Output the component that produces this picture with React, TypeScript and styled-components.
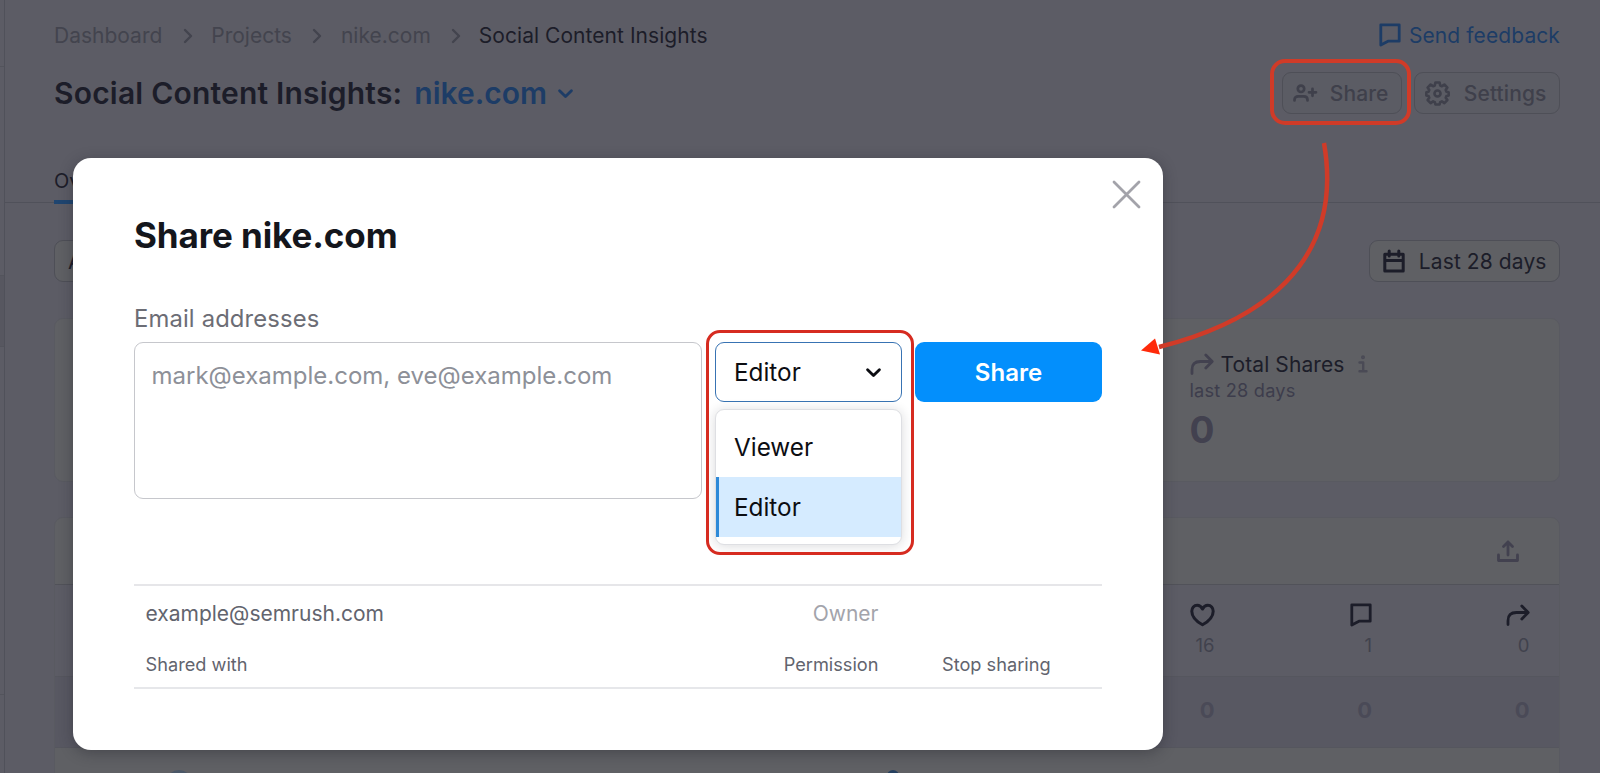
import * as React from "react";
import styled, { createGlobalStyle, css } from "styled-components";

const theme = {
  fontFamily: `Inter, "Liberation Sans", sans-serif`,
  page: "#5c5c65",
  card: "#5f6064",
  line: "#50515a",
  ink: "#1c1d29",
  muted: "#42414f",
  faint: "#43444e",
  link: "#1d3c66",
  red: "#d03b28"
};

const GlobalStyle = createGlobalStyle`
  * {
    box-sizing: border-box;
  }
  body {
    margin: 0;
    overflow: hidden;
    font-family: ${theme.fontFamily};
    background: ${theme.page};
  }
`;

const Page = styled.div`
  position: relative;
  display: grid;
  grid-template-columns: 5px 1fr;
  width: 1600px;
  height: 773px;
  overflow: hidden;
  background: ${theme.page};
  color: ${theme.ink};
`;

const Rail = styled.div`
  display: flex;
  flex-direction: column;
  border-right: 1px solid ${theme.line};
`;

const RailItem = styled.div<{ height: number; active?: boolean }>`
  flex: none;
  height: ${({ height }) => height}px;
  border-bottom: 1px solid #53545c;
  background: ${({ active }) => (active ? "#575760" : "transparent")};
`;

const Main = styled.main`
  display: flex;
  flex-direction: column;
  min-width: 0;
`;

const Header = styled.header`
  display: flex;
  flex-direction: column;
  flex: none;
  height: 203px;
  padding: 20px 40px 0 49px;
  border-bottom: 1px solid ${theme.line};
`;

const HeaderRow = styled.div<{ height: number }>`
  display: flex;
  flex: none;
  align-items: center;
  justify-content: space-between;
  height: ${({ height }) => height}px;
`;

const Breadcrumbs = styled.nav`
  display: flex;
  align-items: center;
  gap: 18.5px;
  padding-top: 1px;
  font-size: 21px;
  line-height: 30px;
  color: ${theme.faint};
`;

const Current = styled.span`
  margin-left: -1px;
  letter-spacing: 0.05px;
  color: ${theme.ink};
`;

const Feedback = styled.a`
  display: flex;
  align-items: center;
  gap: 8px;
  font-size: 21px;
  letter-spacing: 0.1px;
  color: ${theme.link};
`;

const Title = styled.h1`
  display: flex;
  align-items: center;
  margin: 0;
  font-size: 30px;
  font-weight: 600;
  line-height: 42px;
  letter-spacing: 0.2px;
`;

const Domain = styled.span`
  display: flex;
  align-items: center;
  gap: 10px;
  margin-left: 12px;
  letter-spacing: 0;
  color: ${theme.link};
`;

const Actions = styled.div`
  display: flex;
  gap: 12px;
`;

const GhostButton = styled.button<{ width: number; dark?: boolean }>`
  display: flex;
  align-items: center;
  justify-content: space-between;
  width: ${({ width }) => width}px;
  height: 42px;
  padding: 0 12.5px 0 ${({ dark }) => (dark ? 13 : 10)}px;
  border: 1px solid #4e4f57;
  border-radius: 9px;
  background: ${({ dark }) => (dark ? theme.card : "#5b5c64")};
  color: ${({ dark }) => (dark ? theme.ink : "#3f404b")};
  font-family: inherit;
  font-size: 21px;
  font-weight: ${({ dark }) => (dark ? 400 : 500)};
  letter-spacing: 0.1px;
`;

const Tab = styled.div`
  flex: none;
  width: 120px;
  height: 45px;
  margin: 23px 0 -1px;
  padding-top: 7px;
  border-bottom: 4px solid #1f4570;
  font-size: 20px;
  line-height: 30px;
`;

const Body = styled.section`
  display: flex;
  flex-direction: column;
  padding: 37px 40px 0 49px;
`;

const Card = styled.div<{ height: number }>`
  display: flex;
  flex-direction: column;
  flex: none;
  height: ${({ height }) => height}px;
  margin-top: 36px;
  overflow: hidden;
  border: 1px solid #595a61;
  border-radius: 9px;
  background: ${theme.card};

  & + & {
    margin-top: 35px;
  }
`;

const Stat = styled.div`
  display: flex;
  flex-direction: column;
  width: 369.5px;
  margin-left: auto;
  padding-top: 31px;
  color: ${theme.muted};
`;

const StatName = styled.div`
  display: flex;
  align-items: center;
  height: 28px;
  font-size: 21px;
  letter-spacing: 0.1px;

  span {
    margin: 0 13px 0 7px;
    color: ${theme.ink};
  }
`;

const StatPeriod = styled.div`
  margin-top: -1px;
  font-size: 18.2px;
  line-height: 26px;
  letter-spacing: 0.2px;
  color: #3d3d4c;
`;

const StatValue = styled.div`
  margin-top: 7px;
  font-size: 37px;
  font-weight: 700;
  line-height: 40px;
`;

const TableHead = styled.div`
  display: flex;
  align-items: center;
  justify-content: flex-end;
  flex: none;
  height: 67px;
  padding-right: 40px;
  border-bottom: 1px solid #515259;
  color: ${theme.muted};
`;

const MetricRow = styled.div<{ summary?: boolean }>`
  display: grid;
  flex: none;
  grid-template-columns: repeat(3, 157.5px);
  justify-content: end;
  padding-right: 29.5px;
  background: ${theme.page};
  border-bottom: 1px solid #55565e;
  ${({ summary }) =>
    summary
      ? css`
          height: 71px;
          align-items: center;
          padding-bottom: 4px;
          background: #585862;
          font-size: 22px;
          font-weight: 700;
          color: #4a4a57;
        `
      : css`
          height: 92px;
          padding-top: 18px;
          font-size: 18.5px;
          color: #41424d;
        `}
`;

const Metric = styled.div`
  display: flex;
  flex-direction: column;
  align-items: flex-end;
  gap: 6px;
  line-height: 24px;

  svg {
    color: ${theme.ink};
  }
`;

const PostRow = styled.div`
  display: flex;
  gap: 695px;
  padding: 22px 0 0 111px;
`;

const Dot = styled.span<{ size: number; faded?: boolean }>`
  flex: none;
  width: ${({ size }) => size}px;
  height: ${({ size }) => size}px;
  border-radius: 50%;
  background: ${({ faded }) => (faded ? "#4a5767" : "#25405f")};
`;

// Dialog

const Dialog = styled.div`
  position: absolute;
  top: 158px;
  left: 73px;
  display: flex;
  flex-direction: column;
  width: 1090px;
  height: 592px;
  padding: 56px 61px 0;
  border-radius: 18px;
  background: #fff;
  box-shadow: 0 3px 14px rgba(25, 27, 35, 0.35);
`;

const CloseButton = styled.button`
  position: absolute;
  top: 22px;
  right: 22px;
  display: flex;
  padding: 0;
  border: 0;
  background: transparent;
  color: #a3a3aa;
`;

const DialogTitle = styled.h2`
  margin: 0;
  font-size: 35px;
  font-weight: 700;
  line-height: 42px;
  letter-spacing: -0.1px;
  color: #14161c;
`;

const Label = styled.label`
  margin-top: 45px;
  font-size: 23.8px;
  line-height: 36px;
  letter-spacing: 0.15px;
  color: #6c6d75;
`;

const Form = styled.div`
  display: grid;
  grid-template-columns: 568px 187px 187px;
  column-gap: 13px;
  align-items: start;
  margin-top: 5px;
  width: 968px;
  height: 158px;
`;

const Emails = styled.textarea`
  display: block;
  height: 157px;
  padding: 15px 16.5px;
  border: 1.5px solid #c6c7cc;
  border-radius: 9px;
  resize: none;
  font-family: inherit;
  font-size: 24px;
  line-height: 36px;
  outline: 0;

  &::placeholder {
    color: #8d9098;
    opacity: 1;
  }
`;

const SelectWrap = styled.div`
  display: flex;
  flex-direction: column;
  gap: 7px;
  font-size: 24.3px;
  color: #0c0d12;
`;

const Select = styled.div`
  display: flex;
  align-items: center;
  justify-content: space-between;
  height: 60px;
  padding: 0 19px 0 18px;
  border: 1.5px solid #3873b3;
  border-radius: 9px;
`;

const Menu = styled.div`
  height: 136px;
  padding-top: 7px;
  border: 1px solid #dedfe3;
  border-radius: 9px;
  background: #fff;
  box-shadow: 0 1px 12px rgba(25, 27, 35, 0.16);
`;

const Option = styled.div<{ selected?: boolean }>`
  height: 60px;
  padding-left: 15px;
  line-height: 60px;
  border-left: 3px solid ${({ selected }) => (selected ? "#2f8ad8" : "transparent")};
  background: ${({ selected }) => (selected ? "#d5ebff" : "transparent")};
`;

const ShareButton = styled.button`
  height: 60px;
  border: 0;
  border-radius: 9px;
  background: #038ffc;
  color: #fff;
  font-family: inherit;
  font-size: 24px;
  font-weight: 600;
`;

const Access = styled.div`
  height: 105px;
  margin-top: 84px;
  border-top: 2px solid #e6e6e9;
  border-bottom: 2px solid #e6e7ea;
`;

const AccessRow = styled.div<{ head?: boolean }>`
  display: grid;
  grid-template-columns: 500px 233px 1fr;
  padding-left: 11.5px;
  color: #62646e;
  font-size: ${({ head }) => (head ? 18.2 : 21)}px;
  line-height: ${({ head }) => (head ? 44 : 56)}px;
`;

const Permission = styled.span<{ faded?: boolean }>`
  text-align: right;
  color: ${({ faded }) => (faded ? "#a3a4ab" : "inherit")};
`;

const Stop = styled.span`
  padding-left: 63.5px;
`;

// Red callouts drawn over the page
const Callout = styled.div<{ bright?: boolean }>`
  position: absolute;
  pointer-events: none;
  ${({ bright }) =>
    bright
      ? css`
          top: 330px;
          left: 706px;
          width: 208px;
          height: 225px;
          border: 3px solid #d62b20;
          border-radius: 14px;
        `
      : css`
          top: 59px;
          left: 1270px;
          width: 141px;
          height: 66px;
          border: 4px solid ${theme.red};
          border-radius: 15px;
        `}
`;

const Arrow = styled.svg`
  position: absolute;
  top: 130px;
  left: 1130px;
  pointer-events: none;
`;

interface IconConfig {
  width: number;
  height: number;
  box: string;
  stroke?: number;
  children: React.ReactNode;
}

function Icon(props: IconConfig) {
  return (
    <svg
      width={props.width}
      height={props.height}
      viewBox={props.box}
      fill="none"
      stroke="currentColor"
      strokeWidth={props.stroke || 2.8}
      strokeLinecap="round"
      strokeLinejoin="round"
    >
      {props.children}
    </svg>
  );
}

const Separator = () => (
  <Icon width={12} height={16} box="-2 0 12 16" stroke={2.4}>
    <path d="M2 2l6 6-6 6" />
  </Icon>
);

const ChevronDown = () => (
  <Icon width={17} height={11} box="0 0 17 11" stroke={2.9}>
    <path d="M2.6 2.8l5.9 5.7 5.9-5.7" />
  </Icon>
);

const Bubble = () => (
  <Icon width={22} height={24} box="0 0 22 24">
    <path d="M1.8 1.8h18.4v16.4H9L1.8 22z" />
  </Icon>
);

const Forward = () => (
  <Icon width={24} height={24} box="0 0 24 24">
    <path d="M2 21.5v-3.8c0-5.5 3-8.2 8.5-8.2H22M15.8 3l6.4 6.5-6.4 6.5" />
  </Icon>
);

const AddUser = () => (
  <Icon width={25} height={18} box="0 0 25 18" stroke={2.7}>
    <circle cx="8" cy="4.8" r="3.2" />
    <path d="M1.5 16.5v-.6c0-2.3 1.5-3.6 3.7-3.6h5.6c2.2 0 3.7 1.3 3.7 3.6v.6M19.5 4.8v7M16 8.3h7" />
  </Icon>
);

// Eight rounded teeth around the hub
const Gear = () => (
  <Icon width={25} height={25} box="0 0 24 24" stroke={2.5}>
    <path d="M10 1.5h4l.6 2.8 1.6.7 2.4-1.6 2.9 2.900-1.600 2.400.7 1.600 2.100.5v3l-2.100.6-.7 1.600 1.600 2.300-2.900 2.900-2.400-1.600-1.600.7-.6 2.200h-4l-.6-2.200-1.600-.7-2.400 1.600-2.900-2.900 1.600-2.300-.7-1.600-2.100-.6v-3l2.100-.5.7-1.600L2.500 6.300l2.900-2.900L7.800 5l1.600-.7z" />
    <circle cx="12" cy="12" r="2.9" />
  </Icon>
);

const Calendar = () => (
  <Icon width={22} height={24} box="0 0 22 24" stroke={3}>
    <path d="M1.8 5.3h18.4v16.6H1.8zM2 11.6h18M6.2 2v5M15.8 2v5" />
  </Icon>
);

const Upload = () => (
  <Icon width={22} height={22} box="0 0 22 22" stroke={2.8}>
    <path d="M1.5 15v5.5h19V15M11 15V2M6.5 6.5L11 2l4.5 4.5" />
  </Icon>
);

const Heart = () => (
  <Icon width={25} height={24} box="0 0 25 24" stroke={3}>
    <path d="M12.5 6C11.3 3.6 9.300 2.3 7.2 2.3 4 2.3 1.8 4.8 1.8 8.2c0 5.6 5.2 10.5 10.7 13.6 5.5-3.1 10.7-8 10.7-13.6 0-3.4-2.200-5.900-5.400-5.900-2.100 0-4.100 1.300-5.300 3.700z" />
  </Icon>
);

const Info = () => (
  <Icon width={10} height={18} box="0 0 10 18" stroke={2.4}>
    <path d="M1.5 7.5h3.7V16M1.5 16.3h7" />
    <circle cx="5" cy="2.2" r=".8" />
  </Icon>
);

const InfoTint = styled.i`
  display: flex;
  color: #4a4a55;
`;

export default function App(): React.ReactElement {
  return (
    <Page>
      <GlobalStyle />
      <Rail>
        <RailItem height={67} />
        <RailItem height={209} />
        <RailItem height={71} active />
        <RailItem height={348} />
      </Rail>
      <Main>
        <Header>
          <HeaderRow height={30}>
            <Breadcrumbs>
              <span>Dashboard</span>
              <Separator />
              <span>Projects</span>
              <Separator />
              <span>nike.com</span>
              <Separator />
              <Current>Social Content Insights</Current>
            </Breadcrumbs>
            <Feedback>
              <Bubble />
              Send feedback
            </Feedback>
          </HeaderRow>
          <HeaderRow height={86}>
            <Title>
              Social Content Insights:
              <Domain>
                nike.com
                <ChevronDown />
              </Domain>
            </Title>
            <Actions>
              <GhostButton width={120}>
                <AddUser />
                Share
              </GhostButton>
              <GhostButton width={146}>
                <Gear />
                Settings
              </GhostButton>
            </Actions>
          </HeaderRow>
          <Tab>Overview</Tab>
        </Header>
        <Body>
          <HeaderRow height={42}>
            <GhostButton width={150} dark>
              All
            </GhostButton>
            <GhostButton width={191} dark>
              <Calendar />
              Last 28 days
            </GhostButton>
          </HeaderRow>
          <Card height={164}>
            <Stat>
              <StatName>
                <Forward />
                <span>Total Shares</span>
                <InfoTint>
                  <Info />
                </InfoTint>
              </StatName>
              <StatPeriod>last 28 days</StatPeriod>
              <StatValue>0</StatValue>
            </Stat>
          </Card>
          <Card height={290}>
            <TableHead>
              <Upload />
            </TableHead>
            <MetricRow>
              <Metric>
                <Heart />
                16
              </Metric>
              <Metric>
                <Bubble />1
              </Metric>
              <Metric>
                <Forward />0
              </Metric>
            </MetricRow>
            <MetricRow summary>
              <Metric>0</Metric>
              <Metric>0</Metric>
              <Metric>0</Metric>
            </MetricRow>
            <PostRow>
              <Dot size={26} faded />
              <Dot size={12} />
            </PostRow>
          </Card>
        </Body>
      </Main>
      <Dialog>
        <CloseButton aria-label="Close">
          <Icon width={29} height={29} box="0 0 29 29">
            <path d="M2 2l25 25M27 2L2 27" />
          </Icon>
        </CloseButton>
        <DialogTitle>Share nike.com</DialogTitle>
        <Label>Email addresses</Label>
        <Form>
          <Emails placeholder="mark@example.com, eve@example.com" />
          <SelectWrap>
            <Select>
              Editor
              <ChevronDown />
            </Select>
            <Menu>
              <Option>Viewer</Option>
              <Option selected>Editor</Option>
            </Menu>
          </SelectWrap>
          <ShareButton>Share</ShareButton>
        </Form>
        <Access>
          <AccessRow>
            <span>example@semrush.com</span>
            <Permission faded>Owner</Permission>
          </AccessRow>
          <AccessRow head>
            <span>Shared with</span>
            <Permission>Permission</Permission>
            <Stop>Stop sharing</Stop>
          </AccessRow>
        </Access>
      </Dialog>
      <Callout />
      <Callout bright />
      <Arrow width={220} height={240} viewBox="1130 130 220 240" fill="none">
        <path
          d="M1324 143C1340 235 1297 312 1159 347"
          stroke={theme.red}
          strokeWidth={4.5}
        />
        <path d="M1141 350.5L1155 338.5L1160 354.5Z" fill="#ff2a0a" />
      </Arrow>
    </Page>
  );
}
